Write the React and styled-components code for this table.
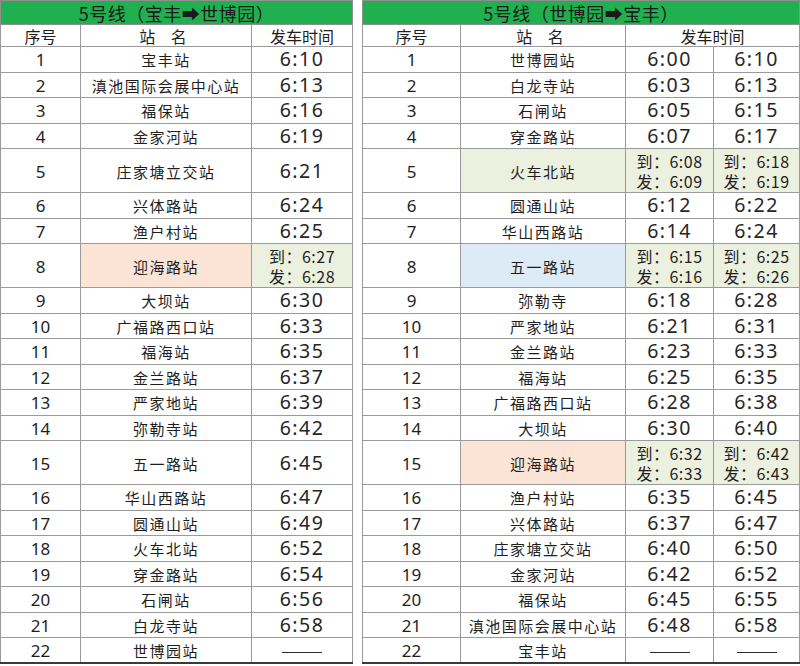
import React from 'react';
import styled, { createGlobalStyle } from 'styled-components';

const GlobalStyle = createGlobalStyle`
  html, body {
    margin: 0;
    padding: 0;
    background: #ffffff;
  }
  body {
    font-family: "Noto Sans CJK SC", "Noto Sans", sans-serif;
    color: #1e1e1e;
  }
`;

const Page = styled.div`
  display: flex;
  align-items: flex-start;
  gap: 9px;
  width: 798px;
`;

const Table = styled.table`
  width: ${p => p.$width}px;
  table-layout: fixed;
  border-collapse: collapse;
  border-bottom: 2px solid #3a3a3a;
`;

const TitleRow = styled.tr`
  height: 24px;
`;

const HeadRow = styled.tr`
  height: 22px;
`;

const TitleCell = styled.th`
  padding: 0;
  background: #21b04f;
  border: 1px solid #8f8f8f;
  font-size: 18px;
  font-weight: 400;
  line-height: 20px;
  letter-spacing: 0.5px;
  color: #1b1b1b;
`;

const HeadCell = styled.th`
  padding: 0;
  border: 1px solid #9a9a9a;
  font-size: 16px;
  font-weight: 400;
  line-height: 18px;
  letter-spacing: ${p => p.$spaced ? '6px' : '0'};
  color: #1e1e1e;
`;

const Row = styled.tr`
  height: ${p => p.$tall ? '44px' : '25.5px'};
`;

const Cell = styled.td`
  padding: 0;
  border: 1px solid #9a9a9a;
  text-align: center;
  vertical-align: middle;
  background: ${p => p.$bg || 'transparent'};
  white-space: nowrap;
`;

const IndexText = styled.span`
  font-family: "Noto Sans", "Noto Sans CJK SC", sans-serif;
  font-size: 17px;
  line-height: 20px;
`;

const StationText = styled.span`
  font-size: 15px;
  letter-spacing: 1.5px;
  line-height: 20px;
`;

const TimeText = styled.span`
  font-family: "Noto Sans", "Noto Sans CJK SC", sans-serif;
  font-size: 19.5px;
  letter-spacing: 1.5px;
  line-height: 22px;
  color: #262626;
`;

const DualTime = styled.div`
  display: flex;
  flex-direction: column;
  align-items: center;
`;

const DualLine = styled.div`
  font-size: 16px;
  line-height: 20px;
  letter-spacing: 0.5px;
`;

const Dash = styled.span`
  display: inline-block;
  width: 40px;
  height: 1px;
  background: #2a2a2a;
  vertical-align: middle;
`;

const PEACH = '#fbe4d5';
const OLIVE = '#ecf0df';
const BLUE = '#dcebf6';

const outbound = [
  ['宝丰站', '6:10'],
  ['滇池国际会展中心站', '6:13'],
  ['福保站', '6:16'],
  ['金家河站', '6:19'],
  ['庄家塘立交站', '6:21'],
  ['兴体路站', '6:24'],
  ['渔户村站', '6:25'],
  ['迎海路站', ['6:27', '6:28']],
  ['大坝站', '6:30'],
  ['广福路西口站', '6:33'],
  ['福海站', '6:35'],
  ['金兰路站', '6:37'],
  ['严家地站', '6:39'],
  ['弥勒寺站', '6:42'],
  ['五一路站', '6:45'],
  ['华山西路站', '6:47'],
  ['圆通山站', '6:49'],
  ['火车北站', '6:52'],
  ['穿金路站', '6:54'],
  ['石闸站', '6:56'],
  ['白龙寺站', '6:58'],
  ['世博园站', null],
];

const inbound = [
  ['世博园站', '6:00', '6:10'],
  ['白龙寺站', '6:03', '6:13'],
  ['石闸站', '6:05', '6:15'],
  ['穿金路站', '6:07', '6:17'],
  ['火车北站', ['6:08', '6:09'], ['6:18', '6:19']],
  ['圆通山站', '6:12', '6:22'],
  ['华山西路站', '6:14', '6:24'],
  ['五一路站', ['6:15', '6:16'], ['6:25', '6:26']],
  ['弥勒寺', '6:18', '6:28'],
  ['严家地站', '6:21', '6:31'],
  ['金兰路站', '6:23', '6:33'],
  ['福海站', '6:25', '6:35'],
  ['广福路西口站', '6:28', '6:38'],
  ['大坝站', '6:30', '6:40'],
  ['迎海路站', ['6:32', '6:33'], ['6:42', '6:43']],
  ['渔户村站', '6:35', '6:45'],
  ['兴体路站', '6:37', '6:47'],
  ['庄家塘立交站', '6:40', '6:50'],
  ['金家河站', '6:42', '6:52'],
  ['福保站', '6:45', '6:55'],
  ['滇池国际会展中心站', '6:48', '6:58'],
  ['宝丰站', null, null],
];

// rows that are double height in both directions
const tallRows = [5, 8, 15];

// station highlight per table, keyed by row number
const outboundStationBg = { 8: PEACH };
const inboundStationBg = { 5: OLIVE, 8: BLUE, 15: PEACH };

const Time = ({ value }) => {
  if (value === null) return <Dash />;
  if (Array.isArray(value)) {
    return (
      <DualTime>
        <DualLine>到：{value[0]}</DualLine>
        <DualLine>发：{value[1]}</DualLine>
      </DualTime>
    );
  }
  return <TimeText>{value}</TimeText>;
};

const timeBg = (value) => (Array.isArray(value) ? OLIVE : undefined);

const OutboundTable = () => (
  <Table $width={352}>
    <colgroup>
      <col style={{ width: 80 }} />
      <col style={{ width: 171 }} />
      <col style={{ width: 101 }} />
    </colgroup>
    <thead>
      <TitleRow>
        <TitleCell colSpan={3}>5号线（宝丰➡世博园）</TitleCell>
      </TitleRow>
      <HeadRow>
        <HeadCell>序号</HeadCell>
        <HeadCell $spaced>站 名</HeadCell>
        <HeadCell>发车时间</HeadCell>
      </HeadRow>
    </thead>
    <tbody>
      {outbound.map(([station, time], i) => {
        const n = i + 1;
        return (
          <Row key={n} $tall={tallRows.includes(n)}>
            <Cell><IndexText>{n}</IndexText></Cell>
            <Cell $bg={outboundStationBg[n]}><StationText>{station}</StationText></Cell>
            <Cell $bg={timeBg(time)}><Time value={time} /></Cell>
          </Row>
        );
      })}
    </tbody>
  </Table>
);

const InboundTable = () => (
  <Table $width={437}>
    <colgroup>
      <col style={{ width: 98 }} />
      <col style={{ width: 165 }} />
      <col style={{ width: 88 }} />
      <col style={{ width: 86 }} />
    </colgroup>
    <thead>
      <TitleRow>
        <TitleCell colSpan={4}>5号线（世博园➡宝丰）</TitleCell>
      </TitleRow>
      <HeadRow>
        <HeadCell>序号</HeadCell>
        <HeadCell $spaced>站 名</HeadCell>
        <HeadCell colSpan={2}>发车时间</HeadCell>
      </HeadRow>
    </thead>
    <tbody>
      {inbound.map(([station, a, b], i) => {
        const n = i + 1;
        return (
          <Row key={n} $tall={tallRows.includes(n)}>
            <Cell><IndexText>{n}</IndexText></Cell>
            <Cell $bg={inboundStationBg[n]}><StationText>{station}</StationText></Cell>
            <Cell $bg={timeBg(a)}><Time value={a} /></Cell>
            <Cell $bg={timeBg(b)}><Time value={b} /></Cell>
          </Row>
        );
      })}
    </tbody>
  </Table>
);

export default function App() {
  return (
    <>
      <GlobalStyle />
      <Page>
        <OutboundTable />
        <InboundTable />
      </Page>
    </>
  );
}
